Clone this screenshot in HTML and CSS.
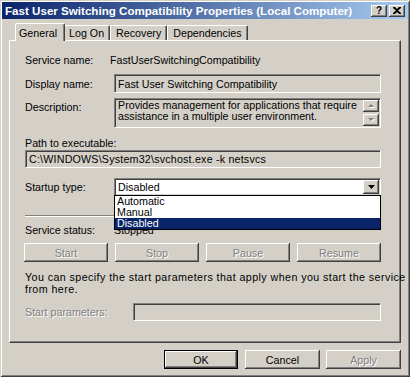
FILE: index.html
```html
<!DOCTYPE html>
<html lang="en">
<head>
    <meta charset="UTF-8">
    <title>Fast User Switching Compatibility Properties (Local Computer)</title>
    <link rel="stylesheet" href="styles.css">
</head>
<body>
    <div class="window">
        <div class="titlebar">
            <span class="title">Fast User Switching Compatibility Properties (Local Computer)</span>
            <div class="caption-buttons">
                <span class="cap-btn">?</span>
                <span class="cap-btn">
                    <svg width="8" height="7" viewBox="0 0 8 7"><path d="M0 0h2l2 2 2-2h2v1L5 3.5 8 6v1H6L4 5 2 7H0V6l3-2.5L0 1z" fill="#000"/></svg>
                </span>
            </div>
        </div>

        <div class="tabs">
            <div class="tab selected">General</div>
            <div class="tab">Log On</div>
            <div class="tab">Recovery</div>
            <div class="tab">Dependencies</div>
        </div>

        <div class="panel">
            <div class="row row-service">
                <span class="label">Service name:</span>
                <span class="static-value">FastUserSwitchingCompatibility</span>
            </div>
            <div class="row row-display">
                <span class="label">Display name:</span>
                <div class="field grow">Fast User Switching Compatibility</div>
            </div>
            <div class="row row-desc">
                <span class="label label-top">Description:</span>
                <div class="field memo grow">
                    <div class="memo-text">Provides management for applications that require<br>assistance in a multiple user environment.</div>
                    <div class="scrollbar">
                        <span class="scroll-btn">
                            <svg width="7" height="5" viewBox="0 0 7 5"><path d="M1 4h6L4 1z" fill="#fff"/><path d="M0 3h6L3 0z" fill="#808080"/></svg>
                        </span>
                        <span class="scroll-btn">
                            <svg width="7" height="5" viewBox="0 0 7 5"><path d="M1 1h6L4 4z" fill="#fff"/><path d="M0 0h6L3 3z" fill="#808080"/></svg>
                        </span>
                    </div>
                </div>
            </div>
            <div class="path-label">Path to executable:</div>
            <div class="field path-field">C:\WINDOWS\System32\svchost.exe -k netsvcs</div>
            <div class="row row-startup">
                <span class="label">Startup type:</span>
                <div class="combo grow">
                    <span class="combo-text">Disabled</span>
                    <span class="combo-btn">
                        <svg width="7" height="4" viewBox="0 0 7 4"><path d="M0 0h7L3.5 4z" fill="#000"/></svg>
                    </span>
                    <ul class="combo-list">
                        <li>Automatic</li>
                        <li>Manual</li>
                        <li class="current">Disabled</li>
                    </ul>
                </div>
            </div>
            <div class="separator"></div>
            <div class="row row-status">
                <span class="label">Service status:</span>
                <span class="status-value">Stopped</span>
            </div>
            <div class="service-buttons">
                <button class="btn disabled">Start</button>
                <button class="btn disabled">Stop</button>
                <button class="btn disabled">Pause</button>
                <button class="btn disabled">Resume</button>
            </div>
            <p class="hint">You can specify the start parameters that apply when you start the service<br>from here.</p>
            <div class="row row-params">
                <span class="label label-wide disabled">Start parameters:</span>
                <div class="field grow"></div>
            </div>
        </div>

        <div class="dialog-buttons">
            <button class="btn default">OK</button>
            <button class="btn">Cancel</button>
            <button class="btn disabled">Apply</button>
        </div>
    </div>
</body>
</html>
```

FILE: styles.css
```css
* {
    box-sizing: border-box;
}
body {
    margin: 0;
    background: #d4d0c8;
    font-family: "Liberation Sans", Arial, sans-serif;
    font-size: 10.7px;
    color: #000;
}
.window {
    width: 410px;
    height: 377px;
    padding: 2px;
    background: #d4d0c8;
    box-shadow: inset 1px 1px #d4d0c8, inset -1px -1px #404040, inset 2px 2px #fff, inset -2px -2px #808080;
}
.titlebar {
    height: 17px;
    display: flex;
    align-items: center;
    justify-content: space-between;
    padding: 0 3px 0 3px;
    background: linear-gradient(to right, #0a246a, #a6caf0);
    color: #fff;
    font-weight: bold;
    font-size: 11.6px;
    white-space: nowrap;
}
.caption-buttons {
    display: flex;
    gap: 2px;
}
.cap-btn {
    width: 16px;
    height: 12px;
    display: flex;
    align-items: center;
    justify-content: center;
    background: #d4d0c8;
    color: #000;
    font-size: 10px;
    box-shadow: inset -1px -1px #404040, inset 1px 1px #fff, inset -2px -2px #808080;
}

/* tabs */
.tabs {
    display: flex;
    align-items: flex-end;
    height: 21px;
    padding-left: 15px;
}
.tab {
    height: 15px;
    padding: 0 5px;
    display: flex;
    align-items: center;
    border-top: 1px solid #fff;
    border-left: 1px solid #fff;
    border-right: 1px solid #404040;
    border-radius: 2px 2px 0 0;
    box-shadow: inset -1px 0 #808080;
    white-space: nowrap;
}
.tab.selected {
    height: 18px;
    margin: 0 -2px -1px -2px;
    padding: 0 7px 0 3px;
    background: #d4d0c8;
    position: relative;
    z-index: 2;
}

/* tab page */
.panel {
    margin: 0 7px;
    height: 303px;
    padding: 0 19px 0 15px;
    border-top: 1px solid #fff;
    border-left: 1px solid #fff;
    border-right: 1px solid #404040;
    border-bottom: 1px solid #404040;
    box-shadow: inset -1px -1px #808080;
}
.row {
    display: flex;
    align-items: center;
}
.label {
    width: 89px;
    flex: none;
    white-space: nowrap;
}
.label-top {
    align-self: flex-start;
    padding-top: 3px;
}
.label-wide {
    width: 108px;
}
.grow {
    flex: 1;
}
.disabled {
    color: #808080;
    text-shadow: 1px 1px 0 #fff;
}
.row-service {
    height: 14px;
    margin-top: 12px;
}
.static-value {
    margin-left: -4px;
}
.field {
    display: flex;
    align-items: center;
    padding: 0 3px;
    background: #d4d0c8;
    border: 1px solid;
    border-color: #808080 #fff #fff #808080;
    box-shadow: inset 1px 1px #404040, inset -1px -1px #d4d0c8;
    white-space: nowrap;
}
.row-display {
    margin-top: 7px;
}
.row-display .field {
    height: 19px;
}
.row-desc {
    margin-top: 5px;
}
.memo {
    height: 30px;
    align-items: stretch;
    padding: 1px 1px 1px 3px;
}
.memo-text {
    flex: 1;
    line-height: 11px;
}
.scrollbar {
    width: 16px;
    display: flex;
    flex-direction: column;
    justify-content: space-between;
}
.scroll-btn {
    height: 12px;
    display: flex;
    align-items: center;
    justify-content: center;
    background: #d4d0c8;
    box-shadow: inset -1px -1px #404040, inset 1px 1px #fff, inset -2px -2px #808080;
}
.path-label {
    height: 12px;
    margin-top: 9px;
    line-height: 12px;
}
.path-field {
    height: 18px;
    margin-top: 1px;
    letter-spacing: 0.2px;
}
.row-startup {
    margin-top: 10px;
}
.combo {
    height: 18px;
    display: flex;
    align-items: stretch;
    padding: 1px;
    background: #fff;
    border: 1px solid;
    border-color: #808080 #fff #fff #808080;
    box-shadow: inset 1px 1px #404040, inset -1px -1px #d4d0c8;
    position: relative;
}
.combo-text {
    flex: 1;
    display: flex;
    align-items: center;
    padding-left: 2px;
}
.combo-btn {
    width: 16px;
    display: flex;
    align-items: center;
    justify-content: center;
    background: #d4d0c8;
    box-shadow: inset -1px -1px #404040, inset 1px 1px #fff, inset -2px -2px #808080;
}
.combo-list {
    position: absolute;
    left: -1px;
    right: -1px;
    top: 16px;
    margin: 0;
    padding: 0;
    list-style: none;
    background: #fff;
    border: 1px solid #000;
    z-index: 3;
}
.combo-list li {
    height: 11px;
    line-height: 11px;
    padding-left: 2px;
}
.combo-list .current {
    background: #0a246a;
    color: #fff;
}
.separator {
    margin-top: 19px;
    height: 2px;
    border-top: 1px solid #808080;
    border-bottom: 1px solid #fff;
}
.row-status {
    height: 14px;
    margin-top: 6px;
}
.service-buttons {
    display: flex;
    justify-content: space-between;
    margin: 6px 0 0 -1px;
}
.service-buttons .btn {
    width: 84px;
}
.btn {
    height: 19px;
    padding: 0;
    border: none;
    background: #d4d0c8;
    font: inherit;
    color: #000;
    box-shadow: inset -1px -1px #404040, inset 1px 1px #fff, inset -2px -2px #808080, inset 2px 2px #d4d0c8;
}
.btn.disabled {
    color: #808080;
}
.btn.default {
    border: 1px solid #000;
}
.hint {
    margin: 9px 0 0;
    line-height: 12px;
    letter-spacing: 0.42px;
    white-space: nowrap;
}
.row-params {
    margin-top: 8px;
}
.row-params .field {
    height: 18px;
}

/* OK / Cancel / Apply */
.dialog-buttons {
    display: flex;
    justify-content: flex-end;
    gap: 6px;
    margin-top: 7px;
    padding-right: 7px;
}
.dialog-buttons .btn {
    width: 75px;
}
.dialog-buttons .default {
    width: 74px;
    margin-right: 1px;
}
```
